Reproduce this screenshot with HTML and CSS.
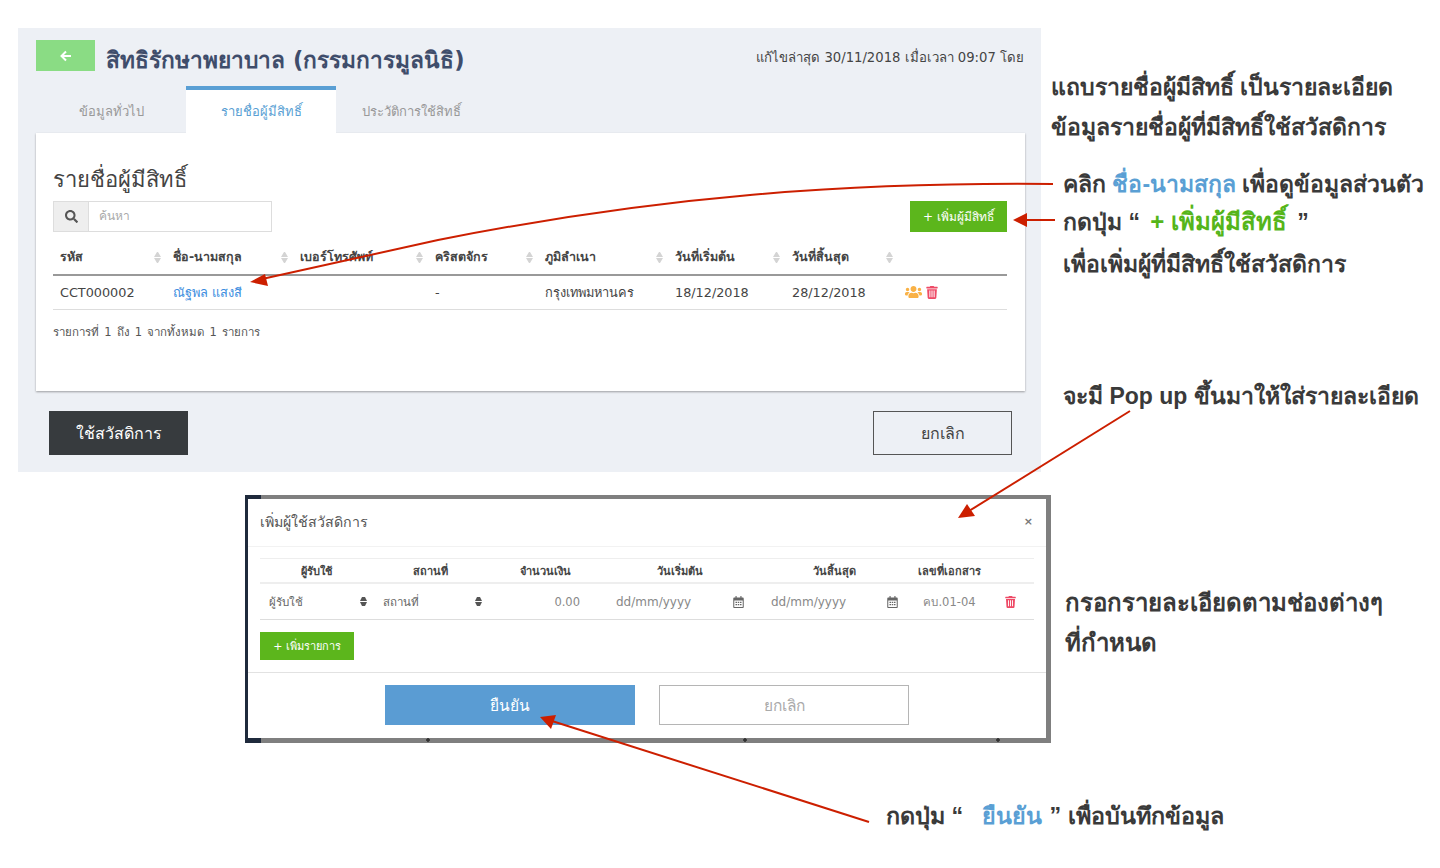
FILE: index.html
```html
<!DOCTYPE html>
<html lang="th">
  <head>
    <meta charset="UTF-8" />
    <meta name="viewport" content="width=device-width, initial-scale=1.0" />
    <title>สิทธิรักษาพยาบาล</title>
    <link rel="stylesheet" href="styles.css">
  </head>
  <body>
    <svg width="0" height="0" class="defs">
      <symbol id="i-search" viewBox="0 0 512 512"><path d="M505 442.7L405.3 343c-4.5-4.5-10.6-7-17-7H372c27.6-35.3 44-79.7 44-128C416 93.1 322.9 0 208 0S0 93.1 0 208s93.1 208 208 208c48.3 0 92.7-16.4 128-44v16.3c0 6.4 2.5 12.5 7 17l99.7 99.7c9.4 9.4 24.6 9.4 33.9 0l28.3-28.3c9.4-9.4 9.4-24.6.1-34zM208 336c-70.7 0-128-57.2-128-128 0-70.7 57.2-128 128-128 70.7 0 128 57.2 128 128 0 70.7-57.2 128-128 128z"/></symbol>
      <symbol id="i-users" viewBox="0 0 640 512"><path d="M96 224c35.3 0 64-28.7 64-64s-28.7-64-64-64-64 28.7-64 64 28.7 64 64 64zm448 0c35.3 0 64-28.7 64-64s-28.7-64-64-64-64 28.7-64 64 28.7 64 64 64zm32 32h-64c-17.6 0-33.5 7.1-45.1 18.6 40.3 22.1 68.9 62 75.1 109.4h66c17.7 0 32-14.3 32-32v-32c0-35.3-28.7-64-64-64zm-256 0c61.9 0 112-50.1 112-112S381.9 32 320 32 208 82.1 208 144s50.1 112 112 112zm76.8 32h-8.3c-20.8 10-43.9 16-68.5 16s-47.6-6-68.5-16h-8.3C179.6 288 128 339.6 128 403.2V432c0 26.5 21.5 48 48 48h288c26.5 0 48-21.5 48-48v-28.8c0-63.6-51.6-115.2-115.2-115.2zm-223.7-13.4C161.5 263.1 145.6 256 128 256H64c-35.3 0-64 28.7-64 64v32c0 17.7 14.3 32 32 32h65.9c6.3-47.4 34.9-87.3 75.2-109.4z"/></symbol>
      <symbol id="i-trash" viewBox="0 0 448 512"><path fill-rule="evenodd" d="M432 32H312l-9.4-18.7A24 24 0 0 0 281.1 0H166.8a23.72 23.72 0 0 0-21.4 13.3L136 32H16A16 16 0 0 0 0 48v32a16 16 0 0 0 16 16h416a16 16 0 0 0 16-16V48a16 16 0 0 0-16-16zM53.2 467a48 48 0 0 0 47.9 45h245.8a48 48 0 0 0 47.9-45L416 128H32zM120 180h40v260h-40zM204 180h40v260h-40zM288 180h40v260h-40z"/></symbol>
      <symbol id="i-cal" viewBox="0 0 448 512"><path fill-rule="evenodd" d="M96 0h48v64h160V0h48v64h48c26.500 0 48 21.500 48 48v352c0 26.500-21.500 48-48 48H48c-26.500 0-48-21.500-48-48V112c0-26.500 21.500-48 48-48h48zM44 192v268c0 4 4 8 8 8h344c4 0 8-4 8-8V192zM96 240h64v56H96zM192 240h64v56h-64zM288 240h64v56h-64zM96 336h64v56H96zM192 336h64v56h-64zM288 336h64v56h-64z"/></symbol>
    </svg>

    <section class="panel">
      <header class="panel-head">
        <a class="back-btn">
          <svg width="12" height="12" viewBox="0 0 12 12"><path d="M6 1.500 1.500 6 6 10.500M2 6h9" fill="none" stroke="#fff" stroke-width="2"/></svg>
        </a>
        <h1 class="panel-title">สิทธิรักษาพยาบาล (กรรมการมูลนิธิ)</h1>
        <span class="edited">แก้ไขล่าสุด 30/11/2018 เมื่อเวลา 09:07 โดย</span>
      </header>

      <nav class="tabs">
        <a class="tab">ข้อมูลทั่วไป</a>
        <a class="tab active">รายชื่อผู้มีสิทธิ์</a>
        <a class="tab">ประวัติการใช้สิทธิ์</a>
      </nav>

      <div class="card">
        <h2 class="card-title">รายชื่อผู้มีสิทธิ์</h2>
        <div class="tools">
          <div class="search">
            <span class="search-icon"><svg width="13" height="13"><use href="#i-search"/></svg></span>
            <span class="search-text">ค้นหา</span>
          </div>
          <button class="btn-green">+ เพิ่มผู้มีสิทธิ์</button>
        </div>

        <table class="list">
          <colgroup>
            <col class="c1"><col class="c2"><col class="c3"><col class="c4"><col class="c5"><col class="c6"><col class="c7"><col class="c8">
          </colgroup>
          <thead>
            <tr>
              <th>รหัส<i class="sort"></i></th>
              <th>ชื่อ-นามสกุล<i class="sort"></i></th>
              <th>เบอร์โทรศัพท์<i class="sort"></i></th>
              <th>คริสตจักร<i class="sort"></i></th>
              <th>ภูมิลำเนา<i class="sort"></i></th>
              <th>วันที่เริ่มต้น<i class="sort"></i></th>
              <th>วันที่สิ้นสุด<i class="sort"></i></th>
              <th></th>
            </tr>
          </thead>
          <tbody>
            <tr>
              <td>CCT000002</td>
              <td><a class="link">ณัฐพล แสงสี</a></td>
              <td></td>
              <td>-</td>
              <td>กรุงเทพมหานคร</td>
              <td>18/12/2018</td>
              <td>28/12/2018</td>
              <td class="actions">
                <svg class="ic-users" width="17" height="14"><use href="#i-users"/></svg>
                <svg class="ic-trash" width="12" height="13"><use href="#i-trash"/></svg>
              </td>
            </tr>
          </tbody>
        </table>
        <p class="info">รายการที่ 1 ถึง 1 จากทั้งหมด 1 รายการ</p>
      </div>

      <div class="panel-foot">
        <button class="btn-dark">ใช้สวัสดิการ</button>
        <button class="btn-outline">ยกเลิก</button>
      </div>
    </section>

    <section class="modal-shot">
      <div class="modal">
        <div class="modal-head">
          <span class="modal-title">เพิ่มผู้ใช้สวัสดิการ</span>
          <span class="modal-close">×</span>
        </div>
        <div class="modal-body">
          <table class="items">
            <colgroup>
              <col class="m1"><col class="m2"><col class="m3"><col class="m4"><col class="m5"><col class="m6"><col class="m7">
            </colgroup>
            <thead>
              <tr>
                <th>ผู้รับใช้</th>
                <th>สถานที่</th>
                <th>จำนวนเงิน</th>
                <th>วันเริ่มต้น</th>
                <th>วันสิ้นสุด</th>
                <th>เลขที่เอกสาร</th>
                <th></th>
              </tr>
            </thead>
            <tbody>
              <tr>
                <td><div class="select">ผู้รับใช้<i class="updown"></i></div></td>
                <td><div class="select">สถานที่<i class="updown"></i></div></td>
                <td class="amount">0.00</td>
                <td><div class="date">dd/mm/yyyy<svg width="11" height="12"><use href="#i-cal"/></svg></div></td>
                <td><div class="date">dd/mm/yyyy<svg width="11" height="12"><use href="#i-cal"/></svg></div></td>
                <td class="doc">คบ.01-04</td>
                <td class="del"><svg class="ic-trash" width="11" height="12"><use href="#i-trash"/></svg></td>
              </tr>
            </tbody>
          </table>
          <button class="btn-add">+ เพิ่มรายการ</button>
        </div>
        <div class="modal-foot">
          <button class="btn-confirm">ยืนยัน</button>
          <button class="btn-cancel">ยกเลิก</button>
        </div>
      </div>
    </section>

    <!-- notes beside the screenshots -->
    <p class="note n1">แถบรายชื่อผู้มีสิทธิ์ เป็นรายละเอียด<br>ข้อมูลรายชื่อผู้ที่มีสิทธิ์ใช้สวัสดิการ</p>
    <p class="note n2">คลิก <span class="blue">ชื่อ-นามสกุล</span> เพื่อดูข้อมูลส่วนตัว</p>
    <p class="note n3">กดปุ่ม “ <span class="green">+ เพิ่มผู้มีสิทธิ์</span> ”<br>เพื่อเพิ่มผู้ที่มีสิทธิ์ใช้สวัสดิการ</p>
    <p class="note n4">จะมี Pop up ขึ้นมาให้ใส่รายละเอียด</p>
    <p class="note n5">กรอกรายละเอียดตามช่องต่างๆ<br>ที่กำหนด</p>
    <p class="note n6">กดปุ่ม “ &nbsp;<span class="blue">ยืนยัน</span> ” เพื่อบันทึกข้อมูล</p>

    <svg class="arrows" width="1440" height="868" viewBox="0 0 1440 868">
      <g fill="none" stroke="#cc1f00" stroke-width="2">
        <path d="M1053 184C850 182 660 196 438 240L262 279"/>
        <path d="M1055 220H1024"/>
        <path d="M1130 411 969 511"/>
        <path d="M869 822 552 721"/>
      </g>
      <g fill="#cc1f00">
        <path d="M250 282 265 274 268 286z"/>
        <path d="M1013 220 1027 213V227z"/>
        <path d="M958 518 967 504 975 516z"/>
        <path d="M540 717 556 715 551 729z"/>
      </g>
    </svg>
  </body>
</html>
```

FILE: styles.css
```css
html,
body {
  margin: 0;
  padding: 0;
}
body {
  position: relative;
  width: 1440px;
  height: 868px;
  overflow: hidden;
  background: #fff;
  font-family: "DejaVu Sans", "Noto Sans", sans-serif;
  color: #444;
  font-size: 12px;
}
button {
  font-family: inherit;
  cursor: pointer;
  border: none;
  padding: 0;
}
.defs {
  position: absolute;
}

/* top screenshot */
.panel {
  box-sizing: border-box;
  width: 1023px;
  height: 444px;
  margin: 28px 0 0 18px;
  padding: 12px 16px 0 18px;
  background: #edf0f5;
}
.panel-head {
  display: flex;
  align-items: center;
  height: 31px;
  padding-right: 1px;
}
.back-btn {
  display: flex;
  align-items: center;
  justify-content: center;
  width: 59px;
  height: 31px;
  background: #8adc84;
}
.panel-title {
  margin: 8px 0 0 11px;
  font-size: 22.700px;
  font-weight: bold;
  color: #3f4d6b;
}
.edited {
  margin-left: auto;
  font-size: 13.200px;
  color: #444;
  position: relative;
  top: 2px;
}
.tabs {
  display: flex;
  height: 47px;
  margin-top: 15px;
}
.tab {
  box-sizing: border-box;
  width: 150px;
  padding-top: 15px;
  text-align: center;
  font-size: 13px;
  color: #999;
}
.tab.active {
  background: #fff;
  border-top: 4px solid #5a9fd4;
  padding-top: 11px;
  color: #5a9fd4;
}
.card {
  box-sizing: border-box;
  height: 258px;
  padding: 31px 18px 0 17px;
  background: #fff;
  box-shadow: 0 1px 2px rgba(0, 0, 0, 0.35);
}
.card-title {
  margin: 0;
  height: 37px;
  font-size: 22px;
  line-height: 32px;
  font-weight: normal;
  color: #444;
}
.tools {
  display: flex;
  justify-content: space-between;
}
.search {
  box-sizing: border-box;
  display: flex;
  width: 219px;
  height: 31px;
  border: 1px solid #ddd;
}
.search-icon {
  display: flex;
  align-items: center;
  justify-content: center;
  width: 34px;
  background: #eee;
  border-right: 1px solid #ddd;
  fill: #555;
}
.search-text {
  padding-left: 10px;
  line-height: 29px;
  font-size: 12px;
  color: #aaa;
}
.btn-green {
  width: 97px;
  height: 31px;
  background: #5cb61c;
  color: #fff;
  font-size: 12px;
}
.list {
  width: 954px;
  margin-top: 8px;
  table-layout: fixed;
  border-collapse: collapse;
}
.c1 { width: 113px; }
.c2 { width: 127px; }
.c3 { width: 135px; }
.c4 { width: 110px; }
.c5 { width: 130px; }
.c6 { width: 117px; }
.c7 { width: 113px; }
.c8 { width: 109px; }
.list th {
  position: relative;
  height: 34px;
  padding: 0 7px;
  text-align: left;
  font-size: 12.500px;
  color: #444;
  border-bottom: 2px solid #999;
}
.list td {
  height: 33px;
  padding: 0 7px;
  font-size: 12.800px;
  color: #444;
  border-bottom: 1px solid #ddd;
}
.sort {
  position: absolute;
  right: 5px;
  top: 12px;
  width: 7px;
  height: 11px;
}
.sort::before,
.updown::before {
  content: "";
  display: block;
  border-left: 3.500px solid transparent;
  border-right: 3.500px solid transparent;
  border-bottom: 5px solid #d4d4d4;
  margin-bottom: 1px;
}
.sort::after,
.updown::after {
  content: "";
  display: block;
  border-left: 3.500px solid transparent;
  border-right: 3.500px solid transparent;
  border-top: 5px solid #d4d4d4;
}
.link {
  color: #3d8ee0;
}
.actions {
  white-space: nowrap;
}
.actions svg {
  position: relative;
  top: -1px;
}
.ic-users {
  fill: #f9b145;
  vertical-align: middle;
}
.ic-trash {
  fill: #ee4a66;
  vertical-align: middle;
}
.info {
  margin: 13px 0 0;
  font-size: 11.500px;
  word-spacing: 1.500px;
  color: #555;
}
.panel-foot {
  display: flex;
  justify-content: space-between;
  margin: 20px 13px 0 13px;
}
.panel-foot button {
  width: 139px;
  height: 44px;
  font-size: 16px;
}
.btn-dark {
  background: #373b3e;
  color: #fff;
}
.btn-outline {
  box-sizing: border-box;
  background: transparent;
  border: 1px solid #555;
  color: #444;
}

/* popup screenshot */
.modal-shot {
  position: absolute;
  left: 245px;
  top: 495px;
  box-sizing: border-box;
  width: 806px;
  height: 248px;
  padding: 4px 5px 5px 3px;
  background:
    radial-gradient(circle at 183px 245px, #333 1.500px, transparent 2px),
    radial-gradient(circle at 500px 245px, #333 1.500px, transparent 2px),
    radial-gradient(circle at 753px 245px, #333 1.500px, transparent 2px),
    linear-gradient(90deg, #1f2a3c 16px, #7f7f7f 16px);
}
.modal {
  height: 239px;
  background: #fff;
}
.modal-head {
  box-sizing: border-box;
  display: flex;
  justify-content: space-between;
  align-items: center;
  height: 48px;
  padding: 0 13px 2px 12px;
  border-bottom: 1px solid #f2f2f2;
}
.modal-title {
  font-size: 14.200px;
  color: #555;
}
.modal-close {
  font-size: 11px;
  font-weight: bold;
  color: #777;
}
.modal-body {
  box-sizing: border-box;
  height: 126px;
  padding: 11px 12px 0;
  border-bottom: 1px solid #e2e2e2;
}
.items {
  width: 774px;
  table-layout: fixed;
  border-collapse: collapse;
}
.m1 { width: 113px; }
.m2 { width: 115px; }
.m3 { width: 114px; }
.m4 { width: 155px; }
.m5 { width: 154px; }
.m6 { width: 77px; }
.m7 { width: 46px; }
.items th {
  height: 23px;
  padding: 0;
  text-align: center;
  font-size: 11px;
  color: #444;
  border-top: 1px solid #eee;
  border-bottom: 2px solid #eee;
}
.items td {
  height: 35px;
  padding: 0;
  font-size: 11.500px;
  color: #888;
  border-bottom: 1px solid #ddd;
}
.select {
  display: flex;
  justify-content: space-between;
  align-items: center;
  padding: 0 6px 0 9px;
  color: #666;
}
td + td .select {
  padding-left: 10px;
}
.updown {
  width: 7px;
}
.updown::before {
  border-left-width: 2.500px;
  border-right-width: 2.500px;
  border-bottom: 4px solid #555;
}
.updown::after {
  border-left-width: 2.500px;
  border-right-width: 2.500px;
  border-top: 4px solid #555;
}
.amount {
  padding-right: 22px !important;
  text-align: right;
}
.date {
  display: flex;
  justify-content: space-between;
  align-items: center;
  padding: 0 13px 0 14px;
  font-size: 12px;
  fill: #666;
}
.doc,
.del {
  text-align: center;
}
.items td.del {
  padding-right: 1px;
}
.btn-add {
  display: block;
  width: 94px;
  height: 28px;
  margin-top: 12px;
  background: #5cb61c;
  color: #fff;
  font-size: 11px;
}
.modal-foot {
  display: flex;
  gap: 24px;
  padding: 12px 0 0 137px;
}
.modal-foot button {
  box-sizing: border-box;
  width: 250px;
  height: 40px;
  font-size: 15.500px;
}
.btn-confirm {
  background: #5a9cd3;
  color: #fff;
}
.btn-cancel {
  background: #fff;
  border: 1px solid #b5b5b5;
  color: #aaa;
}

/* annotations on the free canvas */
.note {
  position: absolute;
  margin: 0;
  font-family: "Liberation Sans", "Noto Sans", sans-serif;
  font-size: 23px;
  font-weight: bold;
  line-height: 40px;
  color: #3a3a3a;
  white-space: nowrap;
}
.n1 { left: 1051px; top: 67px; }
.n2 { left: 1063px; top: 164px; }
.n3 { left: 1063px; top: 201px; line-height: 42px; }
.n3 .green { font-size: 24px; margin: 0 4px; }
.n4 { left: 1063px; top: 376px; }
.n5 { left: 1065px; top: 583px; font-size: 24px; }
.n6 { left: 886px; top: 796px; font-size: 23.300px; }
.n6 .blue { margin: 0 1px 0 6px; }
.blue { color: #5a9fd4; }
.green { color: #55b51a; }
.arrows {
  position: absolute;
  left: 0;
  top: 0;
  pointer-events: none;
}
```
